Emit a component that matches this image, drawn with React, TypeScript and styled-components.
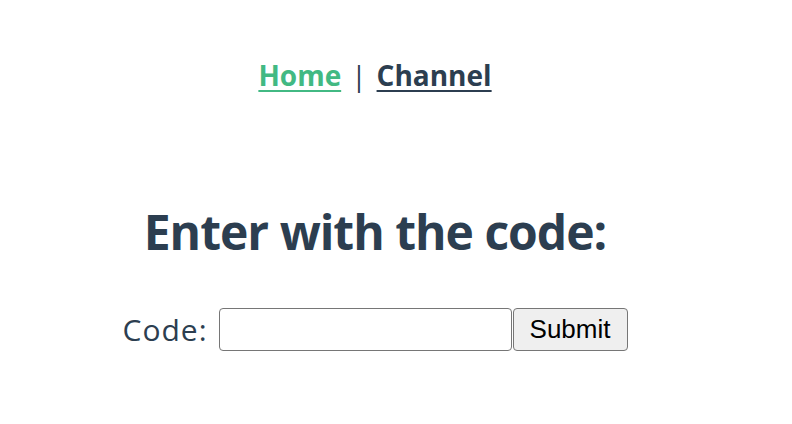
import React from "react";
import styled, { createGlobalStyle } from "styled-components";

const GlobalStyle = createGlobalStyle`
  html, body { margin: 0; padding: 0; background: #ffffff; }
  body { font-family: "Open Sans", Lato, sans-serif; -webkit-font-smoothing: antialiased; }
`;

const Page = styled.div`
  width: 750px;
  color: #2c3e50;
  text-align: center;
`;

const Nav = styled.nav`
  padding-top: 55px;
  font-size: 28px;
  line-height: 40px;
  font-weight: 700;
  display: flex;
  justify-content: center;
  align-items: baseline;
  gap: 10px;
`;

const NavLink = styled.a<{ $active?: boolean }>`
  color: ${(p) => (p.$active ? "#42b983" : "#2c3e50")};
  text-decoration: underline;
  text-decoration-thickness: 2px;
  text-underline-offset: 4px;
  cursor: pointer;
`;

const Sep = styled.span`
  font-weight: 400;
`;

const Title = styled.h1`
  margin: 107px 0 0;
  font-size: 48px;
  line-height: 60px;
  font-weight: 700;
  letter-spacing: -1px;
`;

const Form = styled.form`
  margin-top: 46px;
  display: flex;
  justify-content: center;
  align-items: center;
`;

const Label = styled.label`
  font-size: 30px;
  letter-spacing: 1px;
  font-weight: 400;
  margin-right: 11px;
`;

const Input = styled.input`
  box-sizing: border-box;
  width: 293px;
  height: 43px;
  border: 1px solid #767676;
  border-radius: 4px;
  font-size: 26px;
  padding: 2px 6px;
  margin: 0;
`;

const Button = styled.button`
  box-sizing: border-box;
  width: 115px;
  height: 43px;
  margin: 0 0 0 1px;
  background: #efefef;
  border: 1px solid #767676;
  border-radius: 4px;
  font-family: "Liberation Sans", Arial, sans-serif;
  font-size: 26px;
  color: #000;
  padding: 0;
`;

export default function App() {
  return (
    <Page>
      <GlobalStyle />
      <Nav>
        <NavLink $active>Home</NavLink>
        <Sep>|</Sep>
        <NavLink>Channel</NavLink>
      </Nav>
      <Title>Enter with the code:</Title>
      <Form onSubmit={(e) => e.preventDefault()}>
        <Label htmlFor="code">Code:</Label>
        <Input id="code" type="text" />
        <Button type="submit">Submit</Button>
      </Form>
    </Page>
  );
}
